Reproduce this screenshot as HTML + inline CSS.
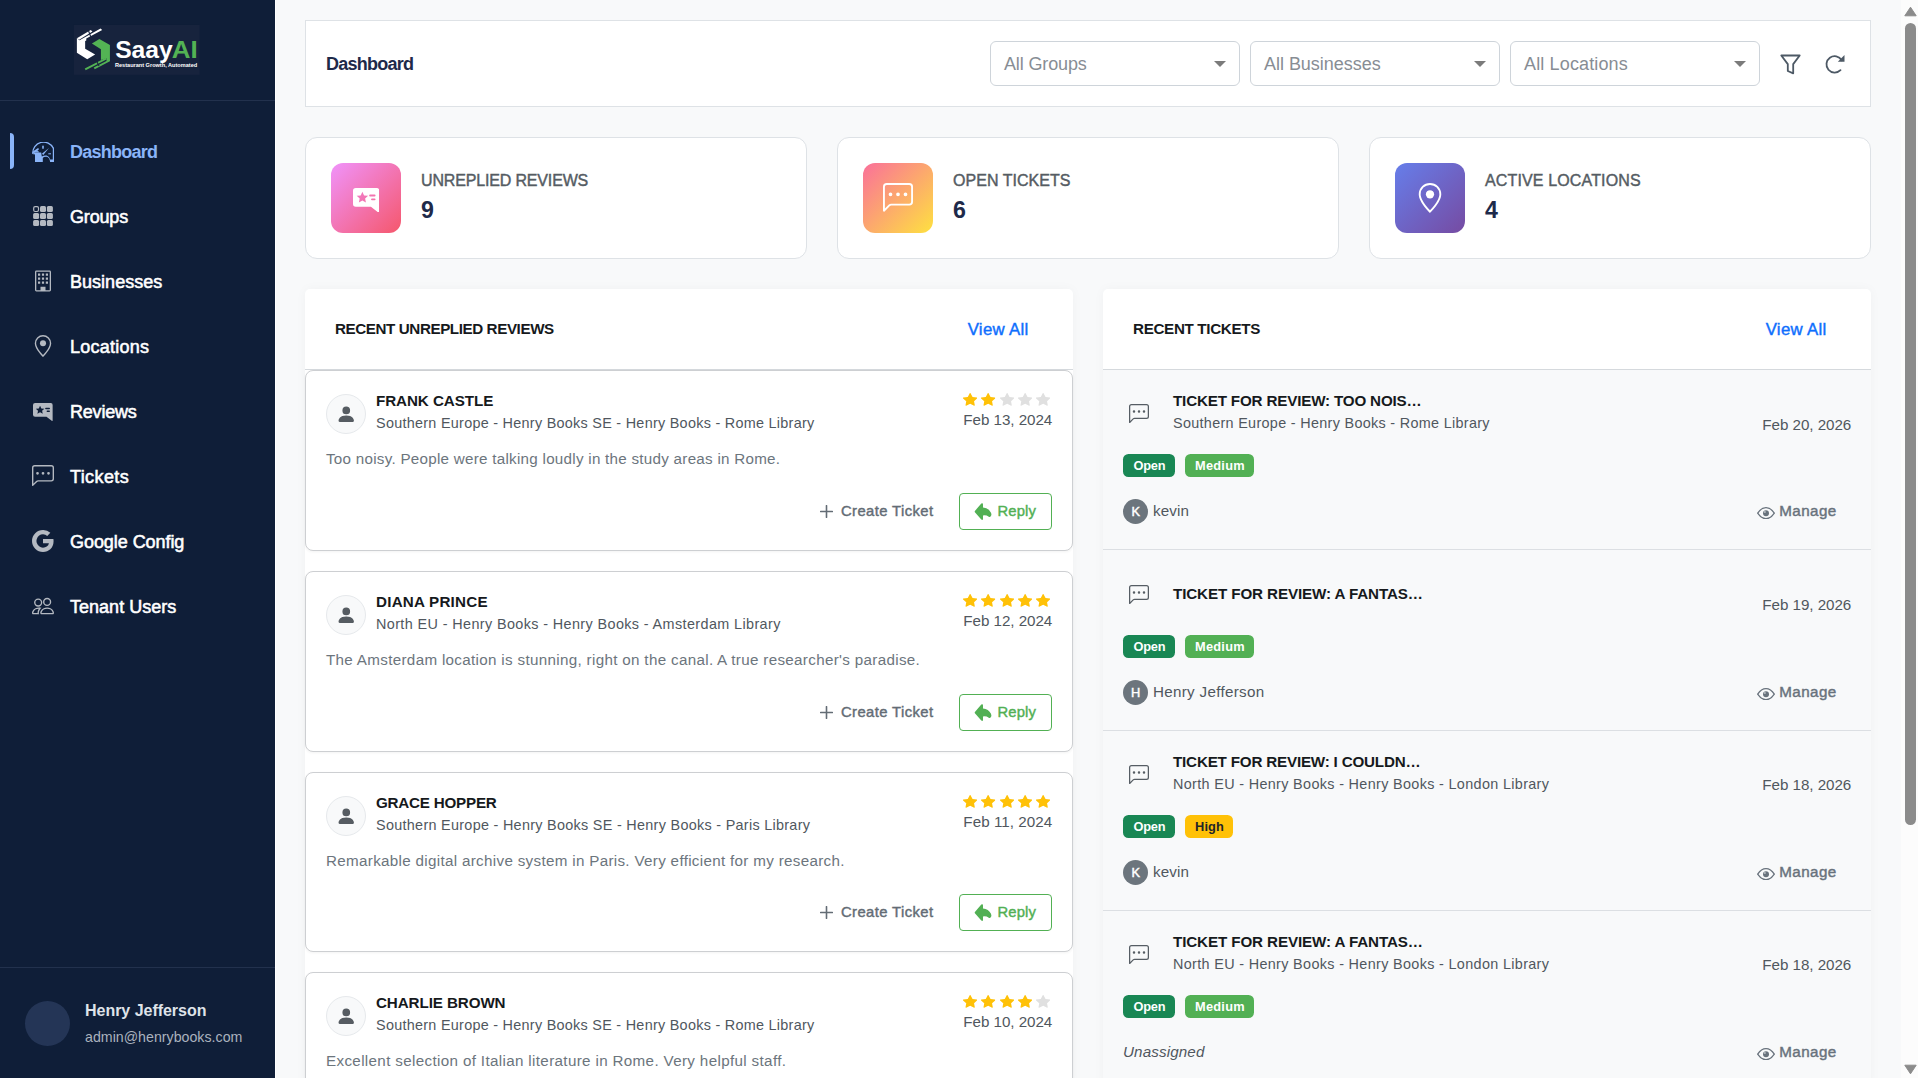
<!DOCTYPE html>
<html lang="en">
<head>
<meta charset="utf-8">
<title>Dashboard</title>
<style>
*{box-sizing:border-box;margin:0;padding:0}
html,body{width:1918px;height:1078px;overflow:hidden}
body{background:#f8f9fa;font-family:"Liberation Sans",sans-serif;color:#212529;font-size:16px;position:relative;-webkit-font-smoothing:antialiased}
.abs{position:absolute}
.t{white-space:nowrap;display:inline-block}
svg{display:block}
/* ---------- sidebar ---------- */
#sidebar{position:absolute;left:0;top:0;width:275px;height:1078px;background:#0f1e38}
#sbline{position:absolute;left:275px;top:0;width:1px;height:1078px;background:#fff}
#logo{position:absolute;left:66px;top:18px}
.sbdiv{position:absolute;left:0;width:275px;height:1px;background:#22314d}
.nav{position:absolute;left:0;width:275px;height:36px}
.nav .ic{position:absolute;left:32px;top:0;width:22px;height:36px;display:flex;align-items:center;justify-content:center;color:#b4b9c1}
.nav .tx{position:absolute;left:70px;top:.7px;line-height:36px;font-size:18px;font-weight:500;color:#fff}
.nav.on .tx{color:#8ab4f8;font-weight:700}
.nav.on .ic{color:#8ab4f8}
.nav.on:before{content:"";position:absolute;left:10px;top:0;width:4px;height:36px;background:#8ab4f8;border-radius:0 4px 4px 0}
#uava{position:absolute;left:25px;top:1001px;width:45px;height:45px;border-radius:50%;background:#243556}
#uname{position:absolute;left:85px;top:998.8px;line-height:24px;font-size:16px;font-weight:700;letter-spacing:.33px;color:#dfe3e9}
#umail{position:absolute;left:85px;top:1025.8px;line-height:22px;font-size:14.2px;color:#aab2be}
/* ---------- header ---------- */
#hdr{position:absolute;left:305px;top:20px;width:1566px;height:87px;background:#fff;border:1px solid #dee2e6}
#hdr .title{position:absolute;left:20px;top:27.6px;line-height:30px;font-size:18px;font-weight:700;color:#1e2a4a}
.sel{position:absolute;top:20px;width:250px;height:45px;border:1px solid #ced4da;border-radius:6px;background:#fff}
.sel .tx{position:absolute;left:13px;top:1px;line-height:43px;font-size:18px;color:#878d94}
.sel .car{position:absolute;left:223px;top:19px;width:0;height:0;border-left:6px solid transparent;border-right:6px solid transparent;border-top:6px solid #7b7b7b}
.hic{position:absolute;color:#4d5965}
/* ---------- stat cards ---------- */
.stat{position:absolute;top:137px;width:502px;height:122px;background:#fff;border:1px solid #dee2e6;border-radius:12px}
.stat .ib{position:absolute;left:25px;top:25px;width:70px;height:70px;border-radius:12px;display:flex;align-items:center;justify-content:center;color:#fff}
.stat .lb{position:absolute;left:115px;top:31px;line-height:24px;font-size:16px;font-weight:500;letter-spacing:.74px;color:#555c63}
.stat .nm{position:absolute;left:115px;top:54.6px;line-height:34px;font-size:23.2px;font-weight:700;color:#1e2a4a}
/* ---------- panels ---------- */
.panel{position:absolute;top:289px;width:768px;height:800px;background:#fff;border-radius:5px 5px 0 0;box-shadow:0 0 12px rgba(0,0,0,.035)}
.panel .ph{position:absolute;left:0;top:0;width:768px;height:81px;border-bottom:1px solid #d5d9dd}
.panel .ph .ti{position:absolute;left:30px;top:27.8px;line-height:24px;font-size:15.2px;font-weight:700;letter-spacing:.47px;color:#16191c}
.panel .ph .va{position:absolute;right:44.5px;top:28.8px;line-height:24px;font-size:16.8px;font-weight:500;letter-spacing:.05px;color:#0d6efd}
/* review cards */
.rv{position:absolute;left:0;width:768px;height:181px;border:1px solid #cdcfd2;border-radius:8px;background:#fff;box-shadow:0 1px 3px rgba(0,0,0,.05)}
.rv .av{position:absolute;left:20px;top:23px;width:40px;height:40px;border-radius:50%;background:#f8f9fa;border:1px solid #e6e9ec;display:flex;align-items:center;justify-content:center;color:#565c62}
.rv .nm{position:absolute;left:70px;top:17.8px;line-height:24px;font-size:15.2px;font-weight:700;letter-spacing:.76px;color:#16191c}
.rv .sub{position:absolute;left:70px;top:39.9px;line-height:24px;font-size:14.4px;letter-spacing:.52px;color:#50575e}
.rv .txt{position:absolute;left:20px;top:75.5px;line-height:24px;font-size:15.2px;letter-spacing:.316px;color:#6c757d}
.rv .stars{position:absolute;left:657px;top:22.2px;width:90px;height:13px}
.rv .dt{position:absolute;right:19.8px;top:36.7px;line-height:24px;font-size:15.2px;letter-spacing:.19px;color:#50575e}
.rv .ct{position:absolute;left:514px;top:121.8px;height:37px;line-height:37px;font-size:14.8px;font-weight:500;letter-spacing:.36px;color:#636c75}
.rv .ct svg{position:absolute;left:.2px;top:12.4px}
.rv .ct .t{position:absolute;left:21px;top:0}
.rv .rp{position:absolute;left:653px;top:122px;width:93px;height:37px;border:1px solid #52b054;border-radius:4px;color:#52b054;font-size:14.8px;font-weight:500;letter-spacing:.4px;line-height:35px;background:#fff}
.rv .rp svg{position:absolute;left:-1px;top:-1px}
.rv .rp .t{position:absolute;left:37.5px;top:-.2px}
/* ticket rows */
.tk{position:absolute;left:0;width:768px;height:181px;background:#f8f9fa;border-bottom:1px solid #dcdfe3}
.tk .ci{position:absolute;left:26.2px;color:#565d64}
.tk .ti{position:absolute;left:70px;line-height:22px;font-size:15.2px;font-weight:700;letter-spacing:.68px;color:#16191c}
.tk .sub{position:absolute;left:70px;line-height:24px;font-size:14.4px;letter-spacing:.52px;color:#50575e}
.tk .dt{position:absolute;right:19.8px;line-height:24px;font-size:15.2px;letter-spacing:.19px;color:#50575e}
.bdg{position:absolute;height:23px;line-height:23px;border-radius:5.5px;color:#fff;font-size:12.8px;font-weight:700;letter-spacing:.45px;text-align:center;text-indent:.45px}
.bdg.op{left:20px;width:52px;background:#198754}
.bdg.md{left:82px;width:69px;background:#52b054}
.bdg.hi{left:82px;width:48px;background:#ffc107;color:#212529}
.tk .ua{position:absolute;left:20px;width:25px;height:25px;border-radius:50%;background:#6c757d;color:#fff;font-size:12.8px;font-weight:500;line-height:25px;text-align:center}
.tk .un{position:absolute;left:50px;line-height:24px;font-size:15.2px;letter-spacing:.2px;color:#50575e}
.tk .una{position:absolute;left:20px;line-height:24px;font-size:15.2px;font-style:italic;letter-spacing:.45px;color:#50575e}
.tk .mg{position:absolute;left:653px;height:24px;line-height:24px;font-size:15.2px;font-weight:500;letter-spacing:.45px;color:#68727c}
.tk .mg svg{position:absolute;left:.9px;top:7.9px}
.tk .mg .t{position:absolute;left:23.2px;top:0}
/* medium weight emulation */
.nav .tx{-webkit-text-stroke:.55px currentColor}
.nav.on .tx{-webkit-text-stroke:0}
.stat .lb,.panel .ph .va,.rv .ct,.rv .rp,.tk .mg,.tk .ua{-webkit-text-stroke:.42px currentColor}
/* scrollbar */
#sbar{position:absolute;left:1901px;top:0;width:17px;height:1078px;background:#fcfcfc}
#sthumb{position:absolute;left:4px;top:23px;width:11px;height:802px;border-radius:6px;background:#8b8b8b}
</style>
</head>
<body>
<svg width="0" height="0" style="position:absolute">
<defs>
<symbol id="i-star" viewBox="0.1 0.4 15.8 15.2" preserveAspectRatio="none"><path d="M3.612 15.443c-.386.198-.824-.149-.746-.592l.83-4.73L.173 6.765c-.329-.314-.158-.888.283-.95l4.898-.696L7.538.792c.197-.39.73-.39.927 0l2.184 4.327 4.898.696c.441.062.612.636.282.95l-3.522 3.356.83 4.73c.078.443-.36.79-.746.592L8 13.187l-4.389 2.256z"/></symbol>
<symbol id="i-person" viewBox="0 0 16 16"><path d="M3 14s-1 0-1-1 1-4 6-4 6 3 6 4-1 1-1 1H3zm5-6a3 3 0 1 0 0-6 3 3 0 0 0 0 6z"/></symbol>
<symbol id="i-reply" viewBox="0 0 16 16"><path d="M5.921 11.9 1.353 8.62a.719.719 0 0 1 0-1.238L5.921 4.1A.716.716 0 0 1 7 4.719V6c1.5 0 6 0 7 8-2.5-4.5-7-4-7-4v1.281c0 .56-.606.898-1.079.62z"/></symbol>
<symbol id="i-plus" viewBox="0 0 16 16"><path d="M8 2a.5.5 0 0 1 .5.5v5h5a.5.5 0 0 1 0 1h-5v5a.5.5 0 0 1-1 0v-5h-5a.5.5 0 0 1 0-1h5v-5A.5.5 0 0 1 8 2Z"/></symbol>
<symbol id="i-eye" viewBox="0 0 16 16"><path d="M16 8s-3-5.5-8-5.5S0 8 0 8s3 5.5 8 5.5S16 8 16 8zM1.173 8a13.133 13.133 0 0 1 1.66-2.043C4.12 4.668 5.88 3.5 8 3.5c2.12 0 3.879 1.168 5.168 2.457A13.133 13.133 0 0 1 14.828 8c-.058.087-.122.183-.195.288-.335.48-.83 1.12-1.465 1.755C11.879 11.332 10.119 12.5 8 12.5c-2.12 0-3.879-1.168-5.168-2.457A13.134 13.134 0 0 1 1.172 8z"/><path d="M8 5.5a2.5 2.5 0 1 0 0 5 2.5 2.5 0 0 0 0-5zM4.5 8a3.5 3.5 0 1 1 7 0 3.5 3.5 0 0 1-7 0z"/></symbol>
<symbol id="i-chat" viewBox="0 0 16 16"><path d="M14 1a1 1 0 0 1 1 1v8a1 1 0 0 1-1 1H4.414A2 2 0 0 0 3 11.586l-2 2V2a1 1 0 0 1 1-1h12zM2 0a2 2 0 0 0-2 2v12.793a.5.5 0 0 0 .854.353l2.853-2.853A1 1 0 0 1 4.414 12H14a2 2 0 0 0 2-2V2a2 2 0 0 0-2-2H2z"/><path d="M5 6a1 1 0 1 1-2 0 1 1 0 0 1 2 0zm4 0a1 1 0 1 1-2 0 1 1 0 0 1 2 0zm4 0a1 1 0 1 1-2 0 1 1 0 0 1 2 0z"/></symbol>
<symbol id="i-geo" viewBox="0 0 16 16"><path d="M12.166 8.94c-.524 1.062-1.234 2.12-1.96 3.07A31.493 31.493 0 0 1 8 14.58a31.481 31.481 0 0 1-2.206-2.57c-.726-.95-1.436-2.008-1.96-3.07C3.304 7.867 3 6.862 3 6a5 5 0 0 1 10 0c0 .862-.305 1.867-.834 2.94zM8 16s6-5.686 6-10A6 6 0 0 0 2 6c0 4.314 6 10 6 10z"/><circle cx="8" cy="6" r="2.2"/></symbol>
<symbol id="i-review" viewBox="0 0 26.300 24.600" preserveAspectRatio="none"><path fill-rule="evenodd" d="M2.800 0H23.500A2.800 2.800 0 0 1 26.300 2.800V24Q26.300 24.700 25.300 24.500L17.900 18.800H2.800A2.800 2.800 0 0 1 0 16V2.800A2.800 2.800 0 0 1 2.800 0ZM9.39 3.70L11.07 7.39L15.10 7.85L12.10 10.58L12.92 14.55L9.39 12.55L5.86 14.55L6.68 10.58L3.68 7.85L7.71 7.39ZM17.100 6.500h4.500a.950.950 0 0 1 0 1.900h-4.500a.950.950 0 0 1 0-1.900ZM19 10.400h2.600a.950.950 0 0 1 0 1.900H19a.950.950 0 0 1 0-1.900Z"/></symbol>
</defs>
</svg>
<div id="sidebar">
<svg id="logo" width="144" height="64" viewBox="0 0 1918 852">
<rect x="105" y="92" width="1675" height="665" fill="#17233d"/>
<g fill="#fff">
<polygon points="145,270 145,462 283,550 388,485 255,408 255,282 200,312"/>
<polygon points="145,270 330,160 352,178 175,290"/>
<polygon points="175,300 460,140 482,158 270,272 270,300 200,330"/>
</g>
<g fill="#53b354">
<polygon points="345,340 445,278 585,358 585,565 540,592 540,535 465,560 465,415"/>
<polygon points="250,672 530,528 545,550 262,695"/>
<polygon points="370,660 585,548 585,575 382,682"/>
</g>
<g stroke="#17233d" stroke-width="14">
<line x1="300" y1="170" x2="330" y2="250"/>
<line x1="400" y1="560" x2="440" y2="640"/>
</g>
<text x="655" y="527" font-size="312" font-weight="700" fill="#fff" textLength="767" lengthAdjust="spacingAndGlyphs" style="font-family:"Liberation Sans",sans-serif">Saay</text>
<text x="1410" y="527" font-size="312" font-weight="700" fill="#53b354" textLength="345" lengthAdjust="spacingAndGlyphs" style="font-family:"Liberation Sans",sans-serif">AI</text>
<text x="652" y="652" font-size="76" font-weight="700" fill="#fff" textLength="1095" lengthAdjust="spacingAndGlyphs" style="font-family:"Liberation Sans",sans-serif">Restaurant Growth, Automated</text>
</svg>
<div class="sbdiv" style="top:100px"></div>

<div class="nav on" style="top:133px"><div class="ic">
<svg style="margin-top:2px" width="22" height="20" viewBox="0 0 22 20" fill="currentColor"><path d="M.700 11.600A10.900 10.900 0 0 1 21.400 6.300" fill="none" stroke="currentColor" stroke-width="1.300"/><path d="M21.400 5.800V19.900" stroke="currentColor" stroke-width="1.200" fill="none"/><path d="M.300 11.900 3 10.500H9.200L9.800 14.600Q12 13.200 14.700 13.600 17.500 14.500 18.200 17.500H22V19.900H18.100Q17.800 15.600 14.500 14.800 11.800 14.600 10.800 16.100V19.900H3V12.600Z"/><path d="M9.900 11.700 16.900 6 11.300 13Z"/><rect x="10" y="3.700" width="2" height="3" opacity=".8"/><rect x="16.300" y="11.300" width="2.700" height="1"/><path d="M1.600 10 6.600 6.600" stroke="currentColor" stroke-width="1.700" fill="none"/><path d="M.300 11.900 1.200 9.400 5.600 8.300 7.400 10.600 3 10.600Z" opacity=".9"/></svg>
</div><div class="tx"><span class="t" style="letter-spacing:-0.766px">Dashboard</span></div></div>

<div class="nav" style="top:198px"><div class="ic">
<svg width="20" height="20" viewBox="0 0 20 20" fill="currentColor"><rect x="0.7" y="0.7" width="4.800" height="4.800" rx="1.400" fill="none" stroke="currentColor" stroke-width="1.200"/><rect x="7.0" y="0.1" width="6" height="6" rx="1.500"/><rect x="13.9" y="0.1" width="6" height="6" rx="1.500"/><rect x="0.1" y="7.0" width="6" height="6" rx="1.500"/><rect x="7.0" y="7.0" width="6" height="6" rx="1.500"/><rect x="13.9" y="7.0" width="6" height="6" rx="1.500"/><rect x="0.1" y="13.9" width="6" height="6" rx="1.500"/><rect x="7.0" y="13.9" width="6" height="6" rx="1.500"/><rect x="13.9" y="13.9" width="6" height="6" rx="1.500"/></svg>
</div><div class="tx"><span class="t" style="letter-spacing:-0.169px">Groups</span></div></div>

<div class="nav" style="top:263px"><div class="ic">
<svg width="20" height="22" viewBox="0 0 20 22" fill="currentColor"><path fill-rule="evenodd" d="M3.400 0.500h13.200a1.400 1.400 0 0 1 1.400 1.400v18.200a1.400 1.400 0 0 1-1.400 1.400H3.400A1.400 1.400 0 0 1 2 20.100V1.900A1.400 1.400 0 0 1 3.400.500zM3.300 1.800v18.400h4.200v-3.400h5v3.400h4.200V1.800zM5 3.600h2.200v2.200H5zm3.900 0h2.200v2.200H8.900zm3.900 0H15v2.200h-2.200zM5 7.600h2.200v2.200H5zm3.900 0h2.200v2.200H8.900zm3.900 0H15v2.200h-2.200zM5 11.600h2.200v2.200H5zm3.900 0h2.200v2.200H8.900zm3.900 0H15v2.200h-2.200z"/></svg>
</div><div class="tx"><span class="t" style="letter-spacing:0.027px">Businesses</span></div></div>

<div class="nav" style="top:328px"><div class="ic"><svg width="22" height="22" fill="currentColor"><use href="#i-geo"/></svg></div><div class="tx"><span class="t" style="letter-spacing:0.229px">Locations</span></div></div>

<div class="nav" style="top:393px"><div class="ic"><svg style="margin-top:2px" width="19.800" height="18" fill="currentColor"><use href="#i-review" width="19.800" height="18"/></svg></div><div class="tx"><span class="t" style="letter-spacing:-0.199px">Reviews</span></div></div>

<div class="nav" style="top:458px"><div class="ic"><svg width="22" height="22" fill="currentColor"><use href="#i-chat"/></svg></div><div class="tx"><span class="t" style="letter-spacing:0.388px">Tickets</span></div></div>

<div class="nav" style="top:523px"><div class="ic">
<svg width="22" height="22" viewBox="0 0 16 16" fill="currentColor"><path d="M15.545 6.558a9.42 9.42 0 0 1 .139 1.626c0 2.434-.87 4.492-2.384 5.885h.002C11.978 15.292 10.158 16 8 16A8 8 0 1 1 8 0a7.689 7.689 0 0 1 5.352 2.082l-2.284 2.284A4.347 4.347 0 0 0 8 3.166c-2.087 0-3.86 1.408-4.492 3.304a4.792 4.792 0 0 0 0 3.063h.003c.635 1.893 2.405 3.301 4.492 3.301 1.078 0 2.004-.276 2.722-.764h-.003a3.702 3.702 0 0 0 1.599-2.431H8v-3.08h7.545z"/></svg>
</div><div class="tx"><span class="t" style="letter-spacing:-0.059px">Google Config</span></div></div>

<div class="nav" style="top:588px"><div class="ic">
<svg width="22" height="22" viewBox="0 0 16 16" fill="currentColor"><path d="M15 14s1 0 1-1-1-4-5-4-5 3-5 4 1 1 1 1h8zm-7.978-1A.261.261 0 0 1 7 12.996c.001-.264.167-1.030.760-1.720C8.312 10.629 9.282 10 11 10c1.717 0 2.687.630 3.240 1.276.593.690.758 1.457.760 1.720l-.008.002a.274.274 0 0 1-.014.002H7.022zM11 7a2 2 0 1 0 0-4 2 2 0 0 0 0 4zm3-2a3 3 0 1 1-6 0 3 3 0 0 1 6 0zM6.936 9.280a5.880 5.880 0 0 0-1.230-.247A7.350 7.350 0 0 0 5 9c-4 0-5 3-5 4 0 .667.333 1 1 1h4.216A2.238 2.238 0 0 1 5 13c0-1.010.377-2.042 1.090-2.904.243-.294.526-.569.846-.816zM4.920 10A5.493 5.493 0 0 0 4 13H1c0-.260.164-1.030.760-1.724.545-.636 1.492-1.256 3.160-1.275zM1.500 5.500a3 3 0 1 1 6 0 3 3 0 0 1-6 0zm3-2a2 2 0 1 0 0 4 2 2 0 0 0 0-4z"/></svg>
</div><div class="tx"><span class="t" style="letter-spacing:0.020px">Tenant Users</span></div></div>

<div class="sbdiv" style="top:967px"></div>
<div id="uava"></div>
<div id="uname"><span class="t" style="letter-spacing:-0.025px">Henry Jefferson</span></div>
<div id="umail"><span class="t" style="letter-spacing:0.012px">admin@henrybooks.com</span></div>
</div>
<div id="sbline"></div>

<div id="hdr">
<div class="title"><span class="t" style="letter-spacing:-0.766px">Dashboard</span></div>
<div class="sel" style="left:684px"><div class="tx"><span class="t" style="letter-spacing:-0.131px">All Groups</span></div><div class="car"></div></div>
<div class="sel" style="left:944px"><div class="tx"><span class="t" style="letter-spacing:-0.028px">All Businesses</span></div><div class="car"></div></div>
<div class="sel" style="left:1204px"><div class="tx"><span class="t" style="letter-spacing:0.142px">All Locations</span></div><div class="car"></div></div>
<svg class="hic" style="left:1474px;top:33px" width="21" height="21" viewBox="0 0 21 21" fill="none" stroke="currentColor" stroke-width="1.8" stroke-linejoin="round" stroke-linecap="round"><path d="M1.300 1.500h18.400l-6.500 8.600v9.200l-5.400-2.300v-6.900z"/></svg>
<svg class="hic" style="left:1518px;top:33px" width="22" height="21" viewBox="0 0 22 21" fill="none" stroke="currentColor" stroke-width="1.8" stroke-linecap="round"><path d="M16.500 16.200a8.200 8.200 0 1 1 1.200-10"/><path d="M20.500 1v6.700h-6.700z" fill="currentColor" stroke="none"/></svg>
</div>

<div class="stat" style="left:305px"><div class="ib" style="background:linear-gradient(135deg,#f093fb 0%,#f5576c 100%)"><svg width="26.300" height="24.600" fill="currentColor" style="position:absolute;left:21.800px;top:24.600px"><use href="#i-review" width="26.300" height="24.600"/></svg></div><div class="lb"><span class="t" style="letter-spacing:-0.158px">UNREPLIED REVIEWS</span></div><div class="nm"><span class="t" style="letter-spacing:0.406px">9</span></div></div>
<div class="stat" style="left:837px"><div class="ib" style="background:linear-gradient(135deg,#fa709a 0%,#fee140 100%)"><svg width="30" height="30" fill="currentColor"><use href="#i-chat"/></svg></div><div class="lb"><span class="t" style="letter-spacing:0.033px">OPEN TICKETS</span></div><div class="nm"><span class="t" style="letter-spacing:0.406px">6</span></div></div>
<div class="stat" style="left:1369px"><div class="ib" style="background:linear-gradient(135deg,#667eea 0%,#764ba2 100%)"><svg width="30" height="30" fill="currentColor"><use href="#i-geo"/></svg></div><div class="lb"><span class="t" style="letter-spacing:0.140px">ACTIVE LOCATIONS</span></div><div class="nm"><span class="t" style="letter-spacing:0.406px">4</span></div></div>

<div class="panel" style="left:305px">
<div class="ph"><div class="ti"><span class="t" style="letter-spacing:-0.413px">RECENT UNREPLIED REVIEWS</span></div><div class="va"><span class="t" style="letter-spacing:0.294px">View All</span></div></div>
<div class="rv" style="top:81px;height:181px"><div class="av"><svg width="20.500" height="20.500" fill="currentColor"><use href="#i-person"/></svg></div><div class="nm"><span class="t" style="letter-spacing:-0.077px">FRANK CASTLE</span></div><div class="sub"><span class="t" style="letter-spacing:0.278px">Southern Europe - Henry Books SE - Henry Books - Rome Library</span></div><div class="txt"><span class="t" style="letter-spacing:0.266px">Too noisy. People were talking loudly in the study areas in Rome.</span></div><div class="stars"><svg class="abs" style="left:0.0px;top:0" width="14.300" height="12.900" fill="#ffc107"><use href="#i-star" width="14.300" height="12.900"/></svg><svg class="abs" style="left:18.3px;top:0" width="14.300" height="12.900" fill="#ffc107"><use href="#i-star" width="14.300" height="12.900"/></svg><svg class="abs" style="left:36.6px;top:0" width="14.300" height="12.900" fill="#e0e0e0"><use href="#i-star" width="14.300" height="12.900"/></svg><svg class="abs" style="left:54.9px;top:0" width="14.300" height="12.900" fill="#e0e0e0"><use href="#i-star" width="14.300" height="12.900"/></svg><svg class="abs" style="left:73.2px;top:0" width="14.300" height="12.900" fill="#e0e0e0"><use href="#i-star" width="14.300" height="12.900"/></svg></div><div class="dt"><span class="t" style="letter-spacing:-0.056px">Feb 13, 2024</span></div><div class="ct"><svg width="13" height="13" viewBox="0 0 13 13"><path d="M6.500 .700v11.600M.700 6.500h11.600" stroke="currentColor" stroke-width="1.600" stroke-linecap="round" fill="none"/></svg><span class="t" style="letter-spacing:0.407px">Create Ticket</span></div><div class="rp"><svg width="93" height="37" viewBox="0 0 93 37"><path fill="currentColor" d="M15.900 19.300Q15.400 18.600 15.900 17.900L22.300 10.600Q23.900 9.400 24 11.400L24 14.400Q29.500 14.800 32 19.800Q33 22 31.600 23.600Q30.600 24.400 29.400 23.400Q27.500 22 24 22.400L24 25.800Q23.900 27.800 22.300 26.600Z"/></svg><span class="t" style="letter-spacing:0.147px">Reply</span></div></div>
<div class="rv" style="top:282px;height:181px"><div class="av"><svg width="20.500" height="20.500" fill="currentColor"><use href="#i-person"/></svg></div><div class="nm"><span class="t" style="letter-spacing:0.220px">DIANA PRINCE</span></div><div class="sub"><span class="t" style="letter-spacing:0.387px">North EU - Henry Books - Henry Books - Amsterdam Library</span></div><div class="txt"><span class="t" style="letter-spacing:0.321px">The Amsterdam location is stunning, right on the canal. A true researcher's paradise.</span></div><div class="stars"><svg class="abs" style="left:0.0px;top:0" width="14.300" height="12.900" fill="#ffc107"><use href="#i-star" width="14.300" height="12.900"/></svg><svg class="abs" style="left:18.3px;top:0" width="14.300" height="12.900" fill="#ffc107"><use href="#i-star" width="14.300" height="12.900"/></svg><svg class="abs" style="left:36.6px;top:0" width="14.300" height="12.900" fill="#ffc107"><use href="#i-star" width="14.300" height="12.900"/></svg><svg class="abs" style="left:54.9px;top:0" width="14.300" height="12.900" fill="#ffc107"><use href="#i-star" width="14.300" height="12.900"/></svg><svg class="abs" style="left:73.2px;top:0" width="14.300" height="12.900" fill="#ffc107"><use href="#i-star" width="14.300" height="12.900"/></svg></div><div class="dt"><span class="t" style="letter-spacing:-0.056px">Feb 12, 2024</span></div><div class="ct"><svg width="13" height="13" viewBox="0 0 13 13"><path d="M6.500 .700v11.600M.700 6.500h11.600" stroke="currentColor" stroke-width="1.600" stroke-linecap="round" fill="none"/></svg><span class="t" style="letter-spacing:0.407px">Create Ticket</span></div><div class="rp"><svg width="93" height="37" viewBox="0 0 93 37"><path fill="currentColor" d="M15.900 19.300Q15.400 18.600 15.900 17.900L22.300 10.600Q23.900 9.400 24 11.400L24 14.400Q29.500 14.800 32 19.800Q33 22 31.600 23.600Q30.600 24.400 29.400 23.400Q27.500 22 24 22.400L24 25.800Q23.900 27.800 22.300 26.600Z"/></svg><span class="t" style="letter-spacing:0.147px">Reply</span></div></div>
<div class="rv" style="top:483px;height:180px"><div class="av"><svg width="20.500" height="20.500" fill="currentColor"><use href="#i-person"/></svg></div><div class="nm"><span class="t" style="letter-spacing:-0.219px">GRACE HOPPER</span></div><div class="sub"><span class="t" style="letter-spacing:0.296px">Southern Europe - Henry Books SE - Henry Books - Paris Library</span></div><div class="txt"><span class="t" style="letter-spacing:0.315px">Remarkable digital archive system in Paris. Very efficient for my research.</span></div><div class="stars"><svg class="abs" style="left:0.0px;top:0" width="14.300" height="12.900" fill="#ffc107"><use href="#i-star" width="14.300" height="12.900"/></svg><svg class="abs" style="left:18.3px;top:0" width="14.300" height="12.900" fill="#ffc107"><use href="#i-star" width="14.300" height="12.900"/></svg><svg class="abs" style="left:36.6px;top:0" width="14.300" height="12.900" fill="#ffc107"><use href="#i-star" width="14.300" height="12.900"/></svg><svg class="abs" style="left:54.9px;top:0" width="14.300" height="12.900" fill="#ffc107"><use href="#i-star" width="14.300" height="12.900"/></svg><svg class="abs" style="left:73.2px;top:0" width="14.300" height="12.900" fill="#ffc107"><use href="#i-star" width="14.300" height="12.900"/></svg></div><div class="dt"><span class="t" style="letter-spacing:0.038px">Feb 11, 2024</span></div><div class="ct" style="top:120.800px"><svg width="13" height="13" viewBox="0 0 13 13"><path d="M6.500 .700v11.600M.700 6.500h11.600" stroke="currentColor" stroke-width="1.600" stroke-linecap="round" fill="none"/></svg><span class="t" style="letter-spacing:0.407px">Create Ticket</span></div><div class="rp" style="top:121px"><svg width="93" height="37" viewBox="0 0 93 37"><path fill="currentColor" d="M15.900 19.300Q15.400 18.600 15.900 17.900L22.300 10.600Q23.900 9.400 24 11.400L24 14.400Q29.500 14.800 32 19.800Q33 22 31.600 23.600Q30.600 24.400 29.400 23.400Q27.500 22 24 22.400L24 25.800Q23.900 27.800 22.300 26.600Z"/></svg><span class="t" style="letter-spacing:0.147px">Reply</span></div></div>
<div class="rv" style="top:683px;height:181px"><div class="av"><svg width="20.500" height="20.500" fill="currentColor"><use href="#i-person"/></svg></div><div class="nm"><span class="t" style="letter-spacing:-0.099px">CHARLIE BROWN</span></div><div class="sub"><span class="t" style="letter-spacing:0.278px">Southern Europe - Henry Books SE - Henry Books - Rome Library</span></div><div class="txt"><span class="t" style="letter-spacing:0.345px">Excellent selection of Italian literature in Rome. Very helpful staff.</span></div><div class="stars"><svg class="abs" style="left:0.0px;top:0" width="14.300" height="12.900" fill="#ffc107"><use href="#i-star" width="14.300" height="12.900"/></svg><svg class="abs" style="left:18.3px;top:0" width="14.300" height="12.900" fill="#ffc107"><use href="#i-star" width="14.300" height="12.900"/></svg><svg class="abs" style="left:36.6px;top:0" width="14.300" height="12.900" fill="#ffc107"><use href="#i-star" width="14.300" height="12.900"/></svg><svg class="abs" style="left:54.9px;top:0" width="14.300" height="12.900" fill="#ffc107"><use href="#i-star" width="14.300" height="12.900"/></svg><svg class="abs" style="left:73.2px;top:0" width="14.300" height="12.900" fill="#e0e0e0"><use href="#i-star" width="14.300" height="12.900"/></svg></div><div class="dt"><span class="t" style="letter-spacing:-0.056px">Feb 10, 2024</span></div><div class="ct"><svg width="13" height="13" viewBox="0 0 13 13"><path d="M6.500 .700v11.600M.700 6.500h11.600" stroke="currentColor" stroke-width="1.600" stroke-linecap="round" fill="none"/></svg><span class="t" style="letter-spacing:0.407px">Create Ticket</span></div><div class="rp"><svg width="93" height="37" viewBox="0 0 93 37"><path fill="currentColor" d="M15.900 19.300Q15.400 18.600 15.900 17.900L22.300 10.600Q23.900 9.400 24 11.400L24 14.400Q29.500 14.800 32 19.800Q33 22 31.600 23.600Q30.600 24.400 29.400 23.400Q27.500 22 24 22.400L24 25.800Q23.900 27.800 22.300 26.600Z"/></svg><span class="t" style="letter-spacing:0.147px">Reply</span></div></div>
</div>

<div class="panel" style="left:1103px">
<div class="ph"><div class="ti"><span class="t" style="letter-spacing:-0.330px">RECENT TICKETS</span></div><div class="va"><span class="t" style="letter-spacing:0.294px">View All</span></div></div>
<div class="tk" style="top:81px;height:180px"><svg class="ci" style="top:34.2px" width="20" height="20" fill="currentColor"><use href="#i-chat"/></svg><div class="ti" style="top:20px"><span class="t" style="letter-spacing:-0.174px">TICKET FOR REVIEW: TOO NOIS…</span></div><div class="sub" style="top:41.1px"><span class="t" style="letter-spacing:0.312px">Southern Europe - Henry Books - Rome Library</span></div><div class="dt" style="top:42.6px"><span class="t" style="letter-spacing:-0.056px">Feb 20, 2026</span></div><div class="bdg op" style="top:84px"><span class="t" style="letter-spacing:-0.202px">Open</span></div><div class="bdg md" style="top:84px"><span class="t" style="letter-spacing:0.221px">Medium</span></div><div class="ua" style="top:129px"><span class="t" style="letter-spacing:-0.453px">K</span></div><div class="un" style="top:128.75px"><span class="t" style="letter-spacing:0.097px">kevin</span></div><div class="mg" style="top:128.75px"><svg width="18" height="12.400" viewBox="0 0 18 12.400"><path d="M.700 6.200C3.200 2.300 6 .700 9 .700s5.800 1.600 8.300 5.500c-2.500 3.900-5.300 5.500-8.300 5.500S3.200 10.100.700 6.200z" fill="none" stroke="currentColor" stroke-width="1.350" stroke-linejoin="round"/><circle cx="9" cy="6.200" r="3" fill="currentColor"/><circle cx="7.900" cy="5" r="1" fill="#f8f9fa" opacity=".55"/></svg><span class="t" style="letter-spacing:0.445px">Manage</span></div></div>
<div class="tk" style="top:261px;height:181px"><svg class="ci" style="top:35.1px" width="20" height="20" fill="currentColor"><use href="#i-chat"/></svg><div class="ti" style="top:32.6px"><span class="t" style="letter-spacing:-0.116px">TICKET FOR REVIEW: A FANTAS…</span></div><div class="dt" style="top:42.6px"><span class="t" style="letter-spacing:-0.056px">Feb 19, 2026</span></div><div class="bdg op" style="top:85px"><span class="t" style="letter-spacing:-0.202px">Open</span></div><div class="bdg md" style="top:85px"><span class="t" style="letter-spacing:0.221px">Medium</span></div><div class="ua" style="top:130px"><span class="t" style="letter-spacing:-0.156px">H</span></div><div class="un" style="top:129.75px"><span class="t" style="letter-spacing:0.299px">Henry Jefferson</span></div><div class="mg" style="top:129.75px"><svg width="18" height="12.400" viewBox="0 0 18 12.400"><path d="M.700 6.200C3.200 2.300 6 .700 9 .700s5.800 1.600 8.300 5.500c-2.500 3.900-5.300 5.500-8.300 5.500S3.200 10.100.700 6.200z" fill="none" stroke="currentColor" stroke-width="1.350" stroke-linejoin="round"/><circle cx="9" cy="6.200" r="3" fill="currentColor"/><circle cx="7.900" cy="5" r="1" fill="#f8f9fa" opacity=".55"/></svg><span class="t" style="letter-spacing:0.445px">Manage</span></div></div>
<div class="tk" style="top:442px;height:180px"><svg class="ci" style="top:34px" width="20" height="20" fill="currentColor"><use href="#i-chat"/></svg><div class="ti" style="top:20px"><span class="t" style="letter-spacing:-0.191px">TICKET FOR REVIEW: I COULDN…</span></div><div class="sub" style="top:41.1px"><span class="t" style="letter-spacing:0.339px">North EU - Henry Books - Henry Books - London Library</span></div><div class="dt" style="top:41.8px"><span class="t" style="letter-spacing:-0.056px">Feb 18, 2026</span></div><div class="bdg op" style="top:84px"><span class="t" style="letter-spacing:-0.202px">Open</span></div><div class="bdg hi" style="top:84px"><span class="t" style="letter-spacing:0.067px">High</span></div><div class="ua" style="top:129px"><span class="t" style="letter-spacing:-0.453px">K</span></div><div class="un" style="top:128.75px"><span class="t" style="letter-spacing:0.097px">kevin</span></div><div class="mg" style="top:128.75px"><svg width="18" height="12.400" viewBox="0 0 18 12.400"><path d="M.700 6.200C3.200 2.300 6 .700 9 .700s5.800 1.600 8.300 5.500c-2.500 3.900-5.300 5.500-8.300 5.500S3.200 10.100.700 6.200z" fill="none" stroke="currentColor" stroke-width="1.350" stroke-linejoin="round"/><circle cx="9" cy="6.200" r="3" fill="currentColor"/><circle cx="7.900" cy="5" r="1" fill="#f8f9fa" opacity=".55"/></svg><span class="t" style="letter-spacing:0.445px">Manage</span></div></div>
<div class="tk" style="top:622px;height:180px"><svg class="ci" style="top:34px" width="20" height="20" fill="currentColor"><use href="#i-chat"/></svg><div class="ti" style="top:20px"><span class="t" style="letter-spacing:-0.116px">TICKET FOR REVIEW: A FANTAS…</span></div><div class="sub" style="top:41.1px"><span class="t" style="letter-spacing:0.339px">North EU - Henry Books - Henry Books - London Library</span></div><div class="dt" style="top:41.8px"><span class="t" style="letter-spacing:-0.056px">Feb 18, 2026</span></div><div class="bdg op" style="top:84px"><span class="t" style="letter-spacing:-0.202px">Open</span></div><div class="bdg md" style="top:84px"><span class="t" style="letter-spacing:0.221px">Medium</span></div><div class="una" style="top:128.5px"><span class="t" style="letter-spacing:0.130px">Unassigned</span></div><div class="mg" style="top:128.75px"><svg width="18" height="12.400" viewBox="0 0 18 12.400"><path d="M.700 6.200C3.200 2.300 6 .700 9 .700s5.800 1.600 8.300 5.500c-2.500 3.900-5.300 5.500-8.300 5.500S3.200 10.100.700 6.200z" fill="none" stroke="currentColor" stroke-width="1.350" stroke-linejoin="round"/><circle cx="9" cy="6.200" r="3" fill="currentColor"/><circle cx="7.900" cy="5" r="1" fill="#f8f9fa" opacity=".55"/></svg><span class="t" style="letter-spacing:0.445px">Manage</span></div></div>
</div>

<div id="sbar"><svg class="abs" style="left:3px;top:5.500px" width="13" height="11" viewBox="0 0 13 11"><path d="M6.500 1.200 12.200 9.800H.800z" fill="#8b8b8b" stroke="#8b8b8b" stroke-width="1" stroke-linejoin="round"/></svg><div id="sthumb"></div><svg class="abs" style="left:3px;top:1064px" width="13" height="11" viewBox="0 0 13 11"><path d="M6.500 9.800 12.200 1.200H.800z" fill="#8b8b8b" stroke="#8b8b8b" stroke-width="1" stroke-linejoin="round"/></svg></div>

</body>
</html>
